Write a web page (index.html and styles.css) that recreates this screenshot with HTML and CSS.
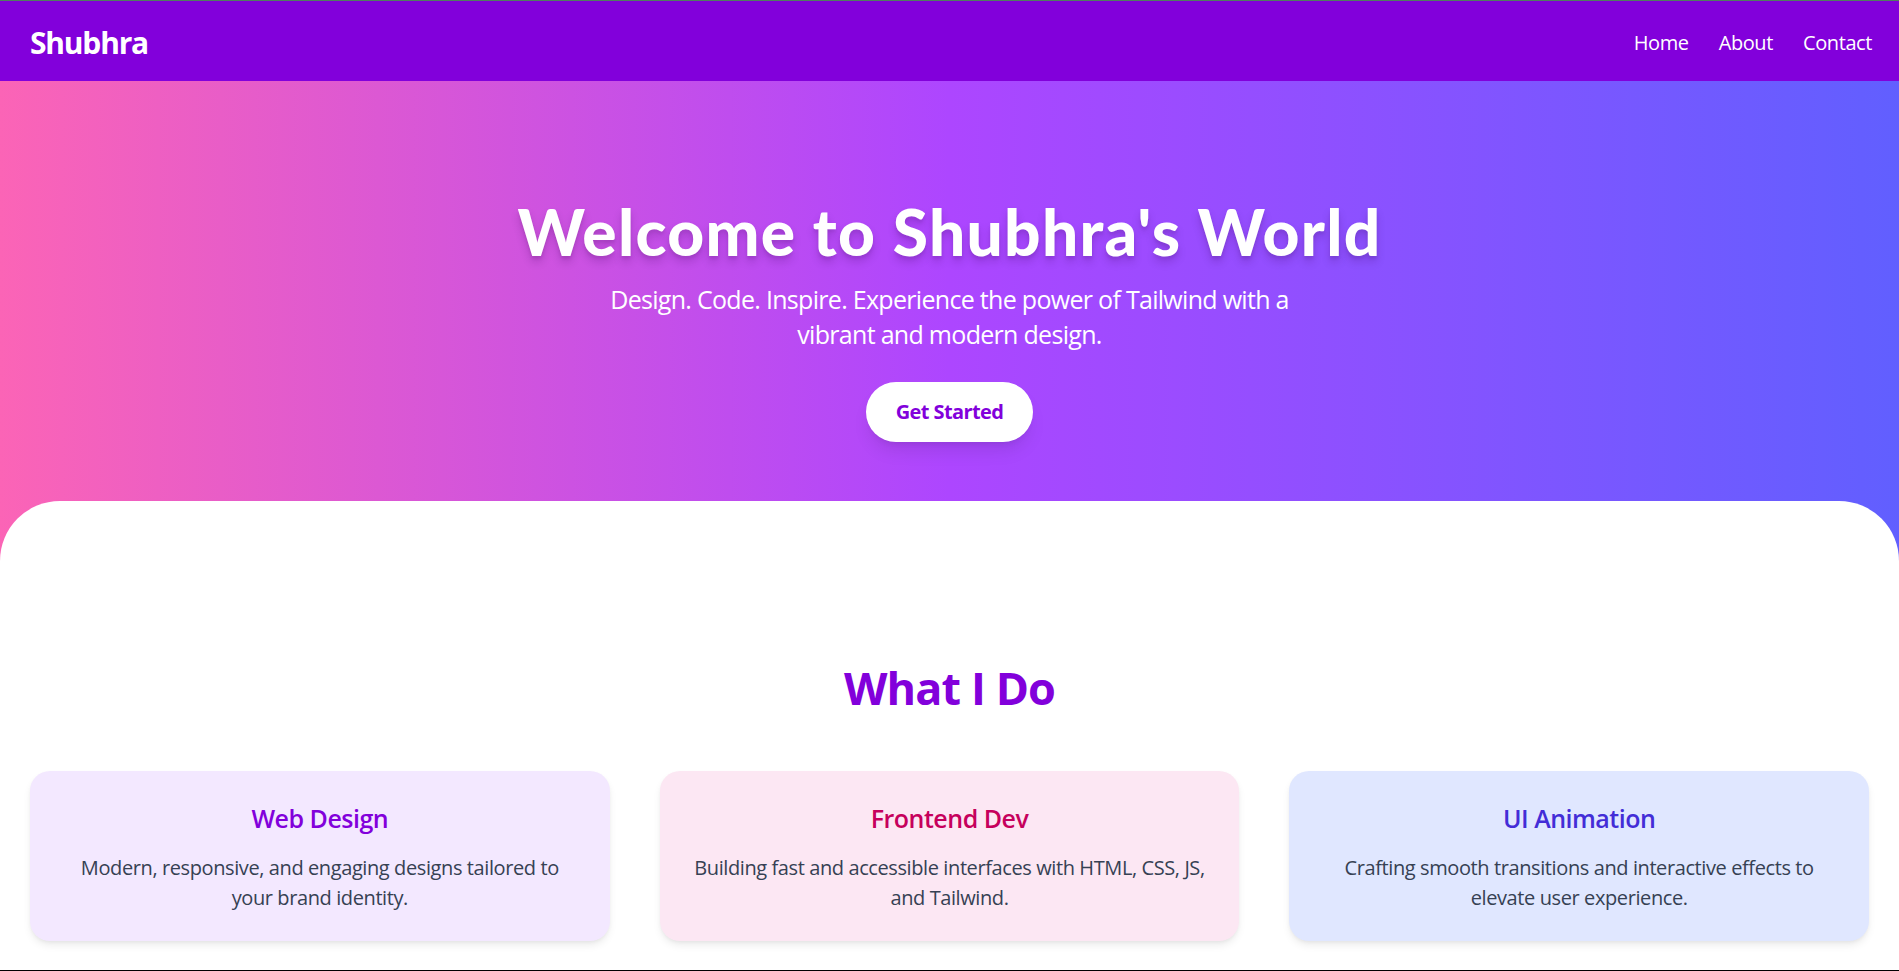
FILE: index.html
```html
<!DOCTYPE html>
<html lang="en">
<head>
<meta charset="utf-8">
<title>Shubhra</title>
<link rel="stylesheet" href="styles.css">
</head>
<body>
<div class="page">
  <nav class="navbar">
    <div class="logo">Shubhra</div>
    <ul class="nav-links">
      <li><a href="#">Home</a></li>
      <li><a href="#">About</a></li>
      <li><a href="#">Contact</a></li>
    </ul>
  </nav>

  <header class="hero">
    <h1 class="hero-title">Welcome to Shubhra's World</h1>
    <p class="hero-sub">Design. Code. Inspire. Experience the power of Tailwind with a vibrant and modern design.</p>
    <a class="hero-btn" href="#">Get Started</a>
  </header>

  <main class="content">
    <h2 class="section-title">What I Do</h2>
    <div class="cards">
      <div class="card card-purple">
        <h3 class="card-title">Web Design</h3>
        <p class="card-text">Modern, responsive, and engaging designs tailored to your brand identity.</p>
      </div>
      <div class="card card-pink">
        <h3 class="card-title">Frontend Dev</h3>
        <p class="card-text">Building fast and accessible interfaces with HTML, CSS, JS, and Tailwind.</p>
      </div>
      <div class="card card-indigo">
        <h3 class="card-title">UI Animation</h3>
        <p class="card-text">Crafting smooth transitions and interactive effects to elevate user experience.</p>
      </div>
    </div>
  </main>
</div>
</body>
</html>
```

FILE: styles.css
```css
* { box-sizing: border-box; }

html, body {
  margin: 0;
  padding: 0;
  background: #ffffff;
}

body {
  font-family: "Open Sans", "Noto Sans", sans-serif;
  color: #364153;
}

.page {
  border-top: 1px solid #4f7d5f;
  border-bottom: 1px solid #000000;
}

.navbar {
  height: 80px;
  background: #8200db;
  display: flex;
  align-items: center;
  justify-content: space-between;
  padding: 3px 27px 0 30px;
}

.logo {
  color: #ffffff;
  font-size: 30px;
  font-weight: 700;
  line-height: 40px;
  letter-spacing: -1.2px;
}

.nav-links {
  list-style: none;
  margin: 0;
  padding: 0;
  display: flex;
  gap: 30px;
}

.nav-links a {
  color: #ffffff;
  text-decoration: none;
  font-size: 20px;
  line-height: 30px;
  letter-spacing: -0.4px;
}

.hero {
  background: linear-gradient(to right, #fb64b6, #ad46ff, #615fff);
  padding: 119px 30px 119px;
  display: flex;
  flex-direction: column;
  align-items: center;
  text-align: center;
}

.hero-title {
  margin: 0 0 18px;
  color: #ffffff;
  font-family: "Lato", "Open Sans", sans-serif;
  font-size: 64px;
  line-height: 64px;
  font-weight: 900;
  letter-spacing: 1.3px;
  text-shadow: 0 6px 9px rgba(60, 0, 90, 0.2), 0 3px 3px rgba(0, 0, 0, 0.08);
}

.hero-sub {
  margin: 0 0 30px;
  max-width: 720px;
  color: #ffffff;
  font-size: 25px;
  line-height: 35px;
  letter-spacing: -0.7px;
}

.hero-btn {
  display: inline-block;
  background: #ffffff;
  color: #8200db;
  font-size: 20px;
  line-height: 30px;
  font-weight: 700;
  letter-spacing: -0.6px;
  padding: 15px 30px;
  border-radius: 999px;
  text-decoration: none;
  box-shadow: 0 12px 18px -4px rgba(0, 0, 0, 0.1), 0 5px 7px -5px rgba(0, 0, 0, 0.1);
}

.content {
  position: relative;
  margin-top: -60px;
  background: #ffffff;
  border-radius: 60px 60px 0 0;
  padding: 162px 30px 29px;
}

.section-title {
  margin: 0 0 58px;
  text-align: center;
  color: #8200db;
  font-size: 45px;
  line-height: 50px;
  font-weight: 700;
  letter-spacing: -0.9px;
}

.cards {
  display: grid;
  grid-template-columns: repeat(3, 1fr);
  gap: 50px;
}

.card {
  border-radius: 20px;
  padding: 30px 30px 28px;
  text-align: center;
  box-shadow: 0 5px 8px -1px rgba(0, 0, 0, 0.08), 0 2px 5px -2px rgba(0, 0, 0, 0.08);
}

.card-title {
  margin: 0 0 17px;
  font-size: 25px;
  line-height: 35px;
  font-weight: 600;
  letter-spacing: -0.5px;
}

.card-text {
  margin: 0;
  font-size: 20px;
  line-height: 30px;
  color: #364153;
  letter-spacing: -0.4px;
}

.card-purple { background: #f3e8ff; }
.card-purple .card-title { color: #8200db; }

.card-pink { background: #fce7f3; }
.card-pink .card-title { color: #c6005c; }

.card-indigo { background: #e0e7ff; }
.card-indigo .card-title { color: #432dd7; }
```
